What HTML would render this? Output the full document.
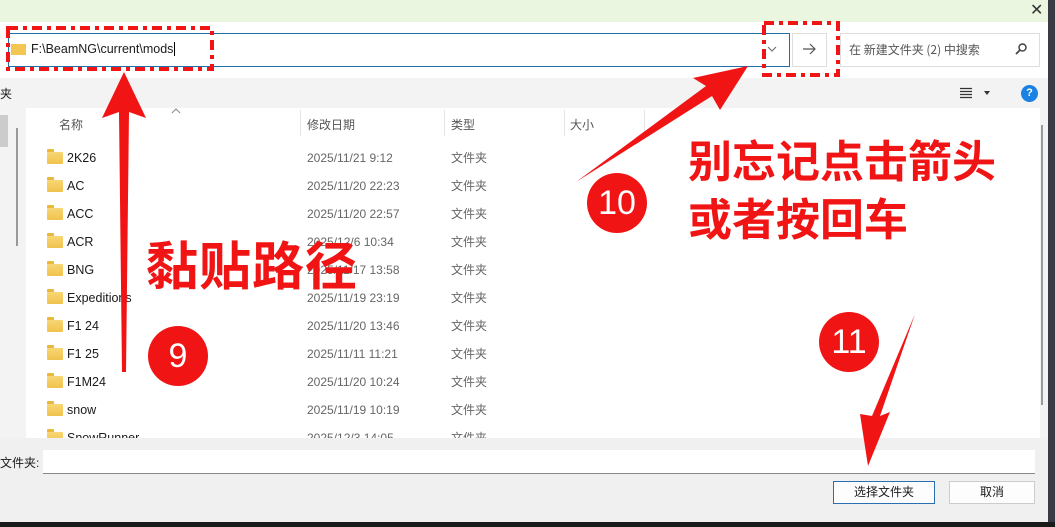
<!DOCTYPE html>
<html><head><meta charset="utf-8"><style>
*{margin:0;padding:0;box-sizing:border-box}
body{width:1055px;height:527px;overflow:hidden;position:relative;background:#fff;font-family:"Liberation Sans","Noto Sans CJK SC",sans-serif;font-size:12px;color:#1a1a1a}
.a{position:absolute}
.row{position:absolute;left:0;height:28px;width:600px}
.row span{line-height:16px}
.row .ic{position:absolute;left:47px;top:5px;width:16px;height:12px;background:linear-gradient(#f8d775,#f0c24c);border-radius:1px}
.row .ic:before{content:"";position:absolute;left:0;top:-3px;width:7px;height:3px;background:#e8b93e;border-radius:1px 1px 0 0}
.row .n{position:absolute;left:67px;top:3px;font-size:12.5px}
.row .d{position:absolute;left:307px;top:3px;color:#666;font-size:12px}
.row .t{position:absolute;left:451px;top:3px;color:#666;font-family:"Noto Sans CJK SC",sans-serif}
.big{position:absolute;color:#f01414;font-weight:bold;font-family:"Noto Sans CJK SC",sans-serif;white-space:nowrap}
.circ{position:absolute;width:60px;height:60px;border-radius:50%;background:#f01414;color:#fff;font-size:34px;text-align:center;line-height:60px;font-family:"Liberation Sans",sans-serif}
</style></head><body>
<div class="a" style="left:0;top:0;width:1055px;height:22px;background:#eaf6e0"></div>
<div class="a" style="left:1030px;top:0px;font-size:16px;color:#333">✕</div>
<div class="a" style="left:0;top:22px;width:1048px;height:56px;background:#fff"></div>
<div class="a" style="left:8px;top:33px;width:782px;height:34px;border:1px solid #1f6fa8;background:#fff"></div>
<div class="a" style="left:11px;top:44px;width:15px;height:11px;background:#f3c651"></div>
<div class="a" style="left:31px;top:42px;font-size:12.5px">F:\BeamNG\current\mods<span style="border-left:1px solid #000;margin-left:1px"></span></div>
<svg class="a" style="left:766px;top:45px" width="12" height="8"><path d="M2 2 L6 6 L10 2" fill="none" stroke="#666" stroke-width="1"/></svg>
<div class="a" style="left:792px;top:33px;width:35px;height:34px;border:1px solid #ddd;background:#fff"></div>
<svg class="a" style="left:801px;top:42px" width="16" height="14"><path d="M2 7 H14 M9 2 L14 7 L9 12" fill="none" stroke="#555" stroke-width="1.2"/></svg>
<div class="a" style="left:840px;top:33px;width:200px;height:34px;border:1px solid #ddd;background:#fff"></div>
<div class="a" style="left:849px;top:41px;color:#555;font-size:12px;font-family:'Noto Sans CJK SC',sans-serif">在 新建文件夹 (2) 中搜索</div>
<svg class="a" style="left:1014px;top:42px" width="14" height="14"><circle cx="8.5" cy="5.5" r="3.5" fill="none" stroke="#444" stroke-width="1.5"/><path d="M6 8 L2 12" stroke="#444" stroke-width="1.8"/></svg>
<div class="a" style="left:0;top:78px;width:1048px;height:30px;background:#f3f3f3"></div>
<div class="a" style="left:0;top:85px;font-size:12px">夹</div>
<svg class="a" style="left:960px;top:87px" width="30" height="12"><path d="M0 1.5H12M0 4.5H12M0 7.5H12M0 10.5H12" stroke="#333" stroke-width="1.2"/><path d="M24 4 L30 4 L27 8Z" fill="#333"/></svg>
<div class="a" style="left:1021px;top:85px;width:17px;height:17px;border-radius:50%;background:#1a82e2;color:#fff;font-size:11px;text-align:center;line-height:17px;font-weight:bold">?</div>
<div class="a" style="left:0;top:108px;width:26px;height:330px;background:#f3f3f3"></div>
<div class="a" style="left:0;top:115px;width:8px;height:32px;background:#ccc"></div>
<div class="a" style="left:16px;top:128px;width:2px;height:118px;background:#999"></div>
<div class="a" style="left:1040px;top:108px;width:8px;height:330px;background:#f3f3f3"></div>
<div class="a" style="left:1041px;top:125px;width:2px;height:280px;background:#999"></div>
<div class="a" style="left:1048px;top:0;width:7px;height:527px;background:#3a3a44"></div>
<div class="a" style="left:59px;top:116px;color:#555">名称</div>
<svg class="a" style="left:171px;top:108px" width="10" height="6"><path d="M1 5 L5 1 L9 5" fill="none" stroke="#888"/></svg>
<div class="a" style="left:300px;top:110px;width:1px;height:26px;background:#e5e5e5"></div>
<div class="a" style="left:307px;top:116px;color:#555">修改日期</div>
<div class="a" style="left:444px;top:110px;width:1px;height:26px;background:#e5e5e5"></div>
<div class="a" style="left:451px;top:116px;color:#555">类型</div>
<div class="a" style="left:564px;top:110px;width:1px;height:26px;background:#e5e5e5"></div>
<div class="a" style="left:570px;top:116px;color:#555">大小</div>
<div class="a" style="left:644px;top:110px;width:1px;height:26px;background:#e5e5e5"></div>
<div class="row" style="top:147px"><i class="ic"></i><span class="n">2K26</span><span class="d">2025/11/21 9:12</span><span class="t">文件夹</span></div>
<div class="row" style="top:175px"><i class="ic"></i><span class="n">AC</span><span class="d">2025/11/20 22:23</span><span class="t">文件夹</span></div>
<div class="row" style="top:203px"><i class="ic"></i><span class="n">ACC</span><span class="d">2025/11/20 22:57</span><span class="t">文件夹</span></div>
<div class="row" style="top:231px"><i class="ic"></i><span class="n">ACR</span><span class="d">2025/12/6 10:34</span><span class="t">文件夹</span></div>
<div class="row" style="top:259px"><i class="ic"></i><span class="n">BNG</span><span class="d">2025/11/17 13:58</span><span class="t">文件夹</span></div>
<div class="row" style="top:287px"><i class="ic"></i><span class="n">Expeditions</span><span class="d">2025/11/19 23:19</span><span class="t">文件夹</span></div>
<div class="row" style="top:315px"><i class="ic"></i><span class="n">F1 24</span><span class="d">2025/11/20 13:46</span><span class="t">文件夹</span></div>
<div class="row" style="top:343px"><i class="ic"></i><span class="n">F1 25</span><span class="d">2025/11/11 11:21</span><span class="t">文件夹</span></div>
<div class="row" style="top:371px"><i class="ic"></i><span class="n">F1M24</span><span class="d">2025/11/20 10:24</span><span class="t">文件夹</span></div>
<div class="row" style="top:399px"><i class="ic"></i><span class="n">snow</span><span class="d">2025/11/19 10:19</span><span class="t">文件夹</span></div>
<div class="row" style="top:427px;height:11px;overflow:hidden"><i class="ic"></i><span class="n">SnowRunner</span><span class="d">2025/12/3 14:05</span><span class="t">文件夹</span></div>
<div class="a" style="left:0;top:438px;width:1048px;height:84px;background:#f0f0f0"></div>
<div class="a" style="left:0;top:522px;width:1055px;height:5px;background:#1a1a1a"></div>
<div class="a" style="left:0;top:454px">文件夹:</div>
<div class="a" style="left:43px;top:450px;width:992px;height:24px;background:#fff;border-bottom:1px solid #888"></div>
<div class="a" style="left:833px;top:481px;width:102px;height:23px;border:1px solid #2a6fb0;background:#fdfdfd;text-align:center;line-height:21px">选择文件夹</div>
<div class="a" style="left:949px;top:481px;width:86px;height:23px;border:1px solid #ccc;background:#fdfdfd;text-align:center;line-height:21px">取消</div>
<svg class="a" style="left:0;top:0" width="1055" height="527">
<g fill="none" stroke="#f01414" stroke-width="4" stroke-dasharray="10,5,4,5">
<rect x="8" y="28" width="204" height="41"/>
<rect x="764" y="23" width="74" height="52"/>
</g>
<g fill="#f01414">
<polygon points="124,72 102,118 119,112 122,372 126,372 129,112 146,118"/>
<polygon points="748,66 693,78 706,86 576,182 712,96 720,110"/>
<polygon points="868,466 890,412 880,416 915,314 872,416 860,414"/>
</g>
</svg>
<div class="big" style="left:146px;top:228px;font-size:52px;line-height:70px;letter-spacing:1px">黏贴路径</div>
<div class="big" style="left:688px;top:128px;font-size:44px;line-height:60px">别忘记点击箭头</div>
<div class="big" style="left:688px;top:186px;font-size:44px;line-height:60px">或者按回车</div>
<div class="circ" style="left:148px;top:326px">9</div>
<div class="circ" style="left:587px;top:173px">10</div>
<div class="circ" style="left:819px;top:312px">11</div>
</body></html>
